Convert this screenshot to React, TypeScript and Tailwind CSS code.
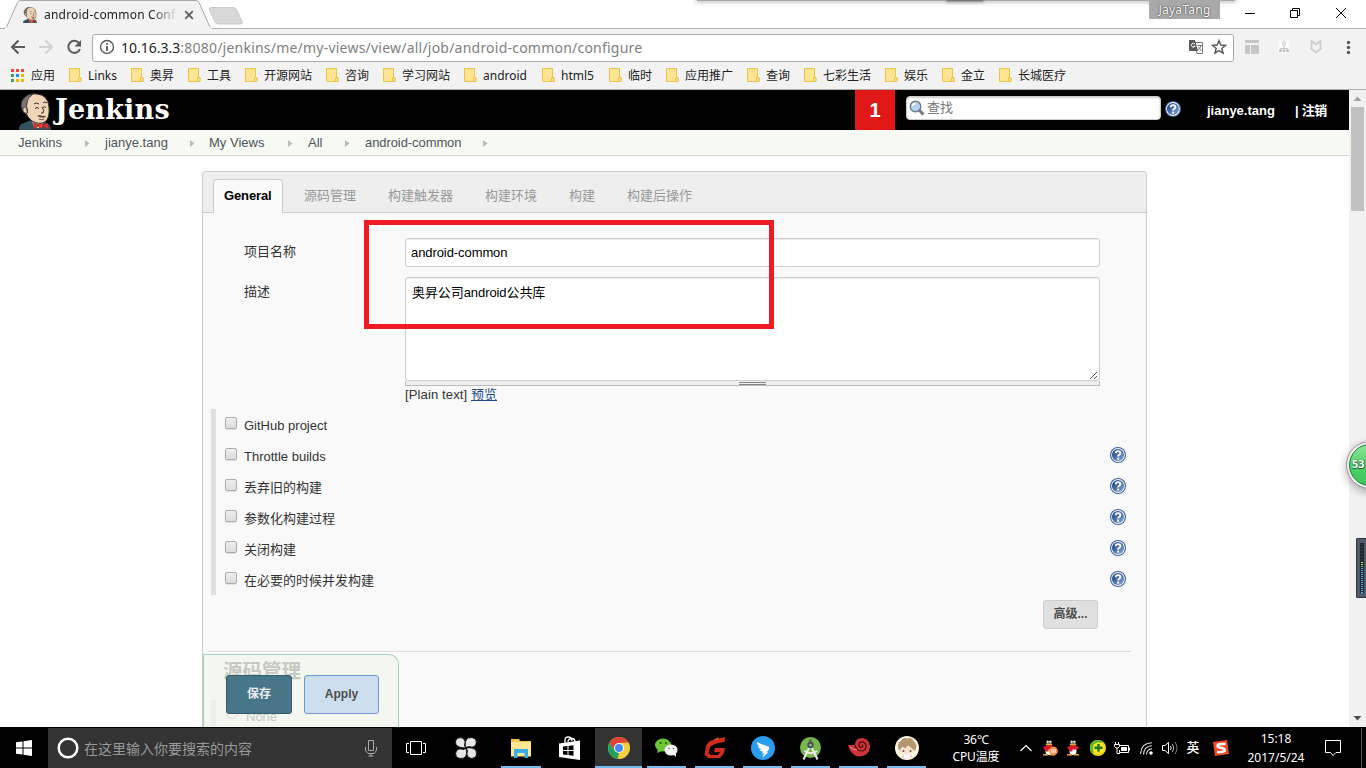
import React from "react";

const ui = "font-['Noto_Sans','Noto_Sans_CJK_SC',sans-serif]";
const web = "font-['Liberation_Sans','Noto_Sans_CJK_SC',sans-serif]";

function Butler({ className }: { className: string }) {
  return (
    <svg className={className} viewBox="0 0 34 37">
      <path d="M1 37 Q1 31 5 30.500 L13 27 L27 29 Q33 31 33 37Z" fill="#335061" />
      <path d="M14 27 L25 29 L24 35 L16 35Z" fill="#fff" />
      <path d="M5 17 Q2 10 7 5 Q11 0 19 1 Q30 2 31 14 Q32 25 27 29 Q21 32 14 28 Q9 24 8 20Z" fill="#f0d6b7" stroke="#3a2c26" strokeWidth="1" />
      <path d="M14 2 Q9 5 9 10 Q8 14 9.500 17 Q10 21 8 21 Q4 19 3 13 Q3 7 7 4 Q10 1 15 1Z" fill="#7c7472" stroke="#2d2624" strokeWidth=".8" />
      <path d="M7 14 Q4 14 5 18 Q6 21 9 20" fill="#f0d6b7" stroke="#3a2c26" strokeWidth=".8" />
      <path d="M16 11 Q18 9 21 11 M25 10 Q27 8 29 10" stroke="#3a2c26" strokeWidth="1" fill="none" />
      <path d="M17 15.500 q2 -2 4 0 M25 14.500 q2 -1.500 3 0 M24 14 Q27 18 25 20 L23 20" stroke="#3a2c26" strokeWidth="1" fill="none" />
      <path d="M19 23 Q22 21 24 23 Q27 22 28 24 Q24 26 19 23Z" fill="#5e4b41" />
      <path d="M21 26 q3 1.500 5 0" stroke="#3a2c26" strokeWidth=".8" fill="none" />
      <path d="M15.500 29.500 L22 32 L16 36.500 Z M30 30 L23.500 32.500 L30.500 36.500 Z" fill="#d33833" stroke="#81201d" strokeWidth=".6" />
      <circle cx="22.800" cy="32.700" r="2.300" fill="#ef3d3a" stroke="#81201d" strokeWidth=".6" />
    </svg>
  );
}

function Help({ className = "" }: { className?: string }) {
  return (
    <svg className={"h-4 w-4 shrink-0 " + className} viewBox="0 0 16 16">
      <defs>
        <linearGradient id="help" x1="0" y1="0" x2="1" y2="1">
          <stop offset="0.100" stopColor="#1e4382" />
          <stop offset="1" stopColor="#86add9" />
        </linearGradient>
      </defs>
      <circle cx="8" cy="8" r="8" fill="#3a5f9d" />
      <circle cx="8" cy="8" r="6.900" fill="#fff" />
      <circle cx="8" cy="8" r="6.100" fill="url(#help)" />
      <path d="M5.700 6.300 Q5.700 4.100 8 4.100 Q10.400 4.100 10.400 6.100 Q10.400 7.200 9.100 7.800 Q8.100 8.300 8.100 9.500" fill="none" stroke="#fff" strokeWidth="1.900" />
      <rect x="7.100" y="10.600" width="2" height="2" fill="#fff" />
    </svg>
  );
}

function Folder() {
  return (
    <svg className="h-[15px] w-[13px] shrink-0" viewBox="0 0 13 15">
      <path d="M.5 .5 H10.500 V9.500 H12 V13.500 H.5Z" fill="#ffe592" stroke="#e9c44c" />
      <path d="M9.500 13.500 V10 H12 V13.500Z" fill="#ffe592" stroke="#e9c44c" />
    </svg>
  );
}

const bookmarks = [
  { name: "Links", w: "w-[62px]" },
  { name: "奥昇", w: "w-[57px]" },
  { name: "工具", w: "w-[57px]" },
  { name: "开源网站", w: "w-[81px]" },
  { name: "咨询", w: "w-[57px]" },
  { name: "学习网站", w: "w-[81px]" },
  { name: "android", w: "w-[78px]" },
  { name: "html5", w: "w-[67px]" },
  { name: "临时", w: "w-[57px]" },
  { name: "应用推广", w: "w-[81px]" },
  { name: "查询", w: "w-[57px]" },
  { name: "七彩生活", w: "w-[81px]" },
  { name: "娱乐", w: "w-[57px]" },
  { name: "金立", w: "w-[57px]" },
  { name: "长城医疗", w: "w-[81px]" },
];

const appColors = ["#f44336", "#f44336", "#f44336", "#3ba55d", "#2b8cf0", "#f5b400", "#3ba55d", "#f5b400", "#f5b400"];

function Browser() {
  return (
    <div className={"shrink-0 text-[#222] " + ui}>
      <div className="relative flex h-[29px] items-start border-b border-[#b3b3b3] bg-white">
        <div className="relative h-[29px] w-[250px]">
          <svg className="absolute inset-0 h-[29px] w-[250px]" viewBox="0 0 250 29">
            <path d="M0 29 V28.500 H4 Q6 28.500 7 26 L17.500 2.500 Q18.500 .5 20.500 .5 H196 Q198 .5 199 2.500 L209.500 26 Q210.500 28.500 213 28.500 V29Z" fill="#f2f2f2" stroke="#a8a8a8" />
            <path d="M5 28.500 H212" stroke="#f2f2f2" strokeWidth="2" />
            <path d="M211.500 7.500 H233.500 Q235.500 7.500 236.500 9.500 L242 21.500 Q243 24 240.500 24 H218 Q216 24 215 22 L209.500 10 Q208.500 7.500 211.500 7.500Z" fill="#d8d8d8" stroke="#c9c9c9" />
          </svg>
          <div className="relative flex h-[29px] items-center pl-[22px]">
            <Butler className="h-4 w-4" />
            <span className="ml-[6px] w-[132px] text-[12px] tracking-[0.200px] whitespace-nowrap [mask-image:linear-gradient(to_right,#000_108px,transparent_134px)]">
              android-common Conf
            </span>
            <svg className="ml-[8px] h-[10px] w-[10px]" viewBox="0 0 10 10">
              <path d="M1.200 1.200 L8.800 8.800 M8.800 1.200 L1.200 8.800" stroke="#5a5a5a" strokeWidth="1.700" />
            </svg>
          </div>
        </div>
        <div className="ml-[447px] h-px w-[538px] bg-[#aaa] shadow-[0_0_4px_1px_#aaa]">
          <div className="ml-[250px] h-px w-[36px] bg-[#777] shadow-[0_0_3px_1px_#888]" />
        </div>
        <div className="absolute top-0 left-[1149px] h-[19px] w-[71px] bg-[#a9a9a9] text-center text-[12px] leading-[20px] tracking-[0.250px] text-white [text-shadow:0_0_2px_#444,0_0_1px_#333]">
          JayaTang
        </div>
        <svg className="absolute top-[7px] left-[1244px] h-3 w-[104px]" viewBox="0 0 104 12" fill="none" stroke="#000">
          <path d="M1 6.500 H11 M46.500 3.500 H53.500 V10.500 H46.500Z M48.500 3 V1.500 H55.500 V8.500 H54 M92 1 L102 11 M102 1 L92 11" />
        </svg>
      </div>

      <div className="flex h-[33px] items-center bg-[#f2f2f2] pt-1">
        <svg className="ml-[10px] h-[18px] w-[74px]" viewBox="0 0 74 18" fill="none" strokeWidth="2">
          <path d="M15 8 H2 M8.500 1.500 L2 8 L8.500 14.500" stroke="#5a5a5a" />
          <path d="M29 8 H42 M35.500 1.500 L42 8 L35.500 14.500" stroke="#d2d2d2" />
          <path d="M69 4 A6 6 0 1 0 70 10" stroke="#5a5a5a" />
          <path d="M71 1 V7.500 H64.500Z" fill="#5a5a5a" />
        </svg>
        <div className="ml-2 flex h-7 w-[1142px] items-center rounded-[3px] border border-[#a9a9a9] bg-white pb-px">
          <svg className="ml-[6px] h-4 w-4" viewBox="0 0 16 16" fill="none" stroke="#5a5a5a">
            <circle cx="8" cy="8" r="6.500" strokeWidth="1.400" />
            <path d="M8 7 V12 M8 4 V5.800" strokeWidth="1.800" />
          </svg>
          <span className="ml-[6px] text-[14px] tracking-[0.220px] whitespace-nowrap text-[#808080]">
            <span className="tracking-normal text-[#222]">10.16.3.3</span>:8080/jenkins/me/my-views/view/all/job/android-common/configure
          </span>
          <svg className="ml-auto h-4 w-[15px]" viewBox="0 0 15 16">
            <path d="M6 3.500 H13.500 V14.500 H8Z" fill="#fff" stroke="#777" />
            <path d="M0 1 H6 L9 12 H1 Q0 12 0 11Z" fill="#5a5a5a" />
            <path d="M6 5 A2 2 0 1 0 6.200 7 H4.500" fill="none" stroke="#fff" />
            <path d="M8.500 6.500 H13 M12 6.500 Q11 10 8.500 11 M9.500 8 L12.500 12" fill="none" stroke="#777" />
          </svg>
          <svg className="mr-[6px] ml-[7px] h-[16px] w-[16px]" viewBox="0 0 15 15">
            <path d="M7.500 1.500 L9.200 5.600 L13.600 6 L10.200 8.900 L11.300 13.200 L7.500 10.900 L3.700 13.200 L4.800 8.900 L1.400 6 L5.800 5.600Z" fill="none" stroke="#5a5a5a" strokeWidth="1.400" />
          </svg>
        </div>
        <svg className="ml-[10px] h-4 w-[110px]" viewBox="0 0 110 16">
          <path d="M1 0 H15 V3 H1Z M1 5 H6 V14 H1Z M7 5 H15 V14 H7Z" fill="#c6c6c6" />
          <rect x="34" y="1" width="12" height="12" rx="1" fill="#fbfbfb" />
          <path d="M40 5 V9 M36.500 10 V8.500 H43.500 V10" stroke="#c4c4c4" fill="none" />
          <circle cx="40" cy="3.500" r="1.500" fill="none" stroke="#c4c4c4" />
          <path d="M35 9.500 h3 v2.500 h-3z M38.700 9.500 h2.800 v2.500 h-2.800z M42.200 9.500 h3 v2.500 h-3z" fill="#c4c4c4" />
          <path d="M67.500 7.500 V1 L72 4.500 L76.500 1 V7.500 M66.500 8 L72 12.500 L77.500 8" fill="none" stroke="#d0d0d0" strokeWidth="2" />
          <circle cx="104.500" cy="2.500" r="1.700" fill="#5a5a5a" />
          <circle cx="104.500" cy="7.500" r="1.700" fill="#5a5a5a" />
          <circle cx="104.500" cy="12.500" r="1.700" fill="#5a5a5a" />
        </svg>
      </div>

      <div className="flex h-7 items-center border-b border-[#b0b0b0] bg-[#f2f2f2] pl-[11px] text-[12px] whitespace-nowrap">
        <div className="flex w-[58px] items-center">
          <svg className="h-[13px] w-[13px]" viewBox="0 0 13 13">
            {appColors.map((c, i) => (
              <rect key={i} x={(i % 3) * 5} y={Math.floor(i / 3) * 5} width="3" height="3" fill={c} />
            ))}
          </svg>
          <span className="ml-[7px]">应用</span>
        </div>
        {bookmarks.map((b) => (
          <div key={b.name} className={"flex shrink-0 items-center gap-[6px] " + b.w}>
            <Folder />
            <span>{b.name}</span>
          </div>
        ))}
      </div>
    </div>
  );
}

const crumbs = [
  { name: "Jenkins", w: "w-[87px]" },
  { name: "jianye.tang", w: "w-[104px]" },
  { name: "My Views", w: "w-[99px]" },
  { name: "All", w: "w-[57px]" },
  { name: "android-common", w: "w-[138px]" },
];
const arrowPos = ["pl-[67px]", "pl-[85px]", "pl-[79px]", "pl-[37px]", "pl-[118px]"];

function Header() {
  return (
    <>
      <div className="flex h-10 shrink-0 items-center bg-black text-white">
        <Butler className="mt-[3px] ml-[18px] h-[37px] w-[34px]" />
        <span className="ml-[3px] w-[120px] font-['DejaVu_Serif',serif] text-[27px] leading-[38px] font-bold tracking-[0.200px]">Jenkins</span>
        <div className="ml-[680px] h-10 w-10 bg-[#e11818] text-center text-[20px] leading-10 font-bold">1</div>
        <div className="mb-[5px] ml-[11px] flex h-6 w-[255px] items-center rounded-[4px] border border-[#ccc] bg-white text-[13px] text-[#777] shadow-[inset_0_1px_2px_#ccc]">
          <svg className="ml-[2px] h-4 w-4" viewBox="0 0 16 16">
            <path d="M10 10 L14.500 14.500" stroke="#777" strokeWidth="3" />
            <circle cx="6.500" cy="6.500" r="5.300" fill="#b4d0f0" stroke="#6c7a8c" strokeWidth="1.400" />
            <path d="M3.500 6 Q4 3.500 6.500 3.500" stroke="#fff" fill="none" strokeWidth="1.500" />
          </svg>
          <span className="ml-[2px]">查找</span>
        </div>
        <Help className="mb-[2px] ml-1" />
        <span className="ml-[26px] w-[88px] pt-px text-[13px] font-bold">jianye.tang</span>
        <span className="pt-px text-[13px] font-bold tracking-[-0.300px] whitespace-nowrap">| 注销</span>
      </div>
      <div className="flex h-[26px] shrink-0 items-center border-b border-[#d3d7cf] bg-[#f6faf2] pl-[18px] text-[13px] text-[#4d545d]">
        {crumbs.map((c, i) => (
          <div key={c.name} className={"grid h-[25px] items-center " + c.w}>
            <span className={"col-start-1 row-start-1" + (i === 4 ? " tracking-[-0.080px]" : "")}>{c.name}</span>
            <span className={"col-start-1 row-start-1 " + arrowPos[i]}>
              <svg className="mt-[2px] h-[7px] w-[5px]" viewBox="0 0 5 7">
                <path d="M0 0 L4.500 3.500 L0 7Z" fill="#bbb" />
              </svg>
            </span>
          </div>
        ))}
      </div>
    </>
  );
}

const tabs = ["源码管理", "构建触发器", "构建环境", "构建", "构建后操作"];
const options = ["GitHub project", "Throttle builds", "丢弃旧的构建", "参数化构建过程", "关闭构建", "在必要的时候并发构建"];

function Config() {
  return (
    <div className="mt-[15px] ml-[202px] flex h-[556px] w-[945px] shrink-0 flex-col overflow-hidden rounded-t-[4px] border border-b-0 border-[#ccc] bg-[#f9f9f9] text-[13px] text-[#333]">
      <div className="flex h-[41px] shrink-0 items-end border-b border-[#ccc] bg-[#eee] pl-[10px]">
        <div className="mb-[-1px] h-[34px] w-[70px] rounded-t-[4px] border border-b-0 border-[#ccc] bg-[#f9f9f9] pl-[10px] leading-[32px] font-bold tracking-[-0.120px] text-black">General</div>
        <div className="flex gap-8 pl-[21px] leading-[33px] text-[#999]">
          {tabs.map((t) => (
            <span key={t}>{t}</span>
          ))}
        </div>
      </div>

      <div className="flex pt-[25px] pl-[41px]">
        <span className="w-[161px] leading-[28px]">项目名称</span>
        <div className="h-[29px] w-[695px] rounded-[3px] border border-[#ccc] bg-white pl-[5px] leading-[27px] tracking-[-0.080px] text-black shadow-[inset_0_1px_1px_rgba(0,0,0,.075)]">android-common</div>
      </div>
      <div className="flex pt-[10px] pl-[41px]">
        <span className="w-[161px] leading-[30px]">描述</span>
        <div className="w-[695px]">
          <div className="flex h-[104px] justify-between rounded-[3px] border border-[#ccc] bg-white pl-[6px] leading-[29px] tracking-[-0.080px] text-black shadow-[inset_0_1px_1px_rgba(0,0,0,.075)]">
            <span>奥昇公司android公共库</span>
            <svg className="h-[10px] w-[10px] self-end" viewBox="0 0 10 10">
              <path d="M1 9 L8 2 M5 9 L8 6" stroke="#555" />
            </svg>
          </div>
          <div className="flex h-[5px] items-center justify-center border border-t-0 border-[#bbb] bg-[#eee]">
            <div className="h-[3px] w-[27px] border-y border-[#888]" />
          </div>
          <div className="leading-[17px]">
            <span className="tracking-[0.130px]">[Plain text] </span>
            <span className="text-[#204a87] underline">预览</span>
          </div>
        </div>
      </div>

      <div className="mt-[6px] ml-2 border-l-[5px] border-[#e0e0e0]">
        {options.map((o, i) => (
          <div key={o} className="flex h-[31px] items-start pl-[9px]">
            <span className="mt-2 h-3 w-3 rounded-[2px] border border-[#adadad] bg-linear-to-b from-[#eee] to-[#dcdcdc] shadow-[0_1px_1px_#ddd]" />
            <span className="ml-[7px] w-[866px] leading-[33px]">{o}</span>
            {i > 0 && <Help className="mt-[7px]" />}
          </div>
        ))}
      </div>
      <div className="mt-[5px] ml-[840px] h-[29px] w-[55px] rounded-[3px] border border-[#ccc] bg-[#e0e0e0] text-center text-[12px] leading-[27px] font-bold text-[#4d4d4d]">高级...</div>
      <div className="mt-[22px] ml-[5px] h-px w-[923px] shrink-0 bg-[#ddd]" />

      <div className="mt-[2px] grid h-[74px] w-[196px] shrink-0 overflow-hidden rounded-tr-[10px] border border-b-0 border-[#a5d0bd] bg-[#f4f7f0] text-[#c5c9c1]">
        <div className="col-start-1 row-start-1 pl-[19px]">
          <div className="h-[45px] text-[19.500px] leading-[33px] font-bold">源码管理</div>
          <div className="-ml-[12px] flex h-[31px] border-l-[5px] border-[#eceee9] pl-[10px]">
            <span className="mt-[7px] h-3 w-3 rounded-full border border-[#d8dbd5]" />
            <span className="ml-2 leading-[34px]">None</span>
          </div>
        </div>
        <div className="relative col-start-1 row-start-1 flex gap-3 pt-5 pl-[22px] text-center leading-[37px] font-bold">
          <div className="h-[39px] w-[66px] rounded-[3px] border border-[#345b69] bg-[#467688] text-[12px] text-[#eee]">保存</div>
          <div className="h-[39px] w-[75px] rounded-[3px] border border-[#6b9bd2] bg-[#cddeee] text-[12px] text-[#4d4d4d]">Apply</div>
        </div>
      </div>
    </div>
  );
}

function Scrollbar() {
  return (
    <div className="flex w-[17px] shrink-0 flex-col items-center bg-[#f1f1f1]">
      <svg className="h-[17px] w-[17px]" viewBox="0 0 17 17"><path d="M4.500 11 L8.500 6.500 L12.500 11Z" fill="#a3a3a3" /></svg>
      <div className="h-[104px] w-[13px] bg-[#c1c1c1]" />
      <svg className="mt-auto h-[17px] w-[17px]" viewBox="0 0 17 17"><path d="M4.500 6 L8.500 10.500 L12.500 6Z" fill="#505050" /></svg>
    </div>
  );
}

function TaskButton({ w, children, active, line = true }: { w: string; children: React.ReactNode; active?: boolean; line?: boolean }) {
  return (
    <div className={"flex h-10 shrink-0 items-center justify-center " + w + (active ? " bg-[#333]" : "") + (line ? " border-b-2 border-[#76b9ed] pt-[2px]" : "")}>
      {children}
    </div>
  );
}

function Tray({ children }: { children: React.ReactNode }) {
  return <div className="flex w-6 shrink-0 items-center justify-center">{children}</div>;
}

function Penguin({ badge }: { badge?: boolean }) {
  return (
    <svg className="h-4 w-4" viewBox="0 0 16 16">
      <ellipse cx="7" cy="9.500" rx="4.500" ry="5.500" fill="#111" />
      <ellipse cx="7" cy="11" rx="3.500" ry="4" fill="#fff" />
      <ellipse cx="7" cy="4" rx="3.500" ry="3.500" fill="#222" />
      <ellipse cx="5.700" cy="2" rx="1.200" ry="1.500" fill="#fff" />
      <ellipse cx="8.300" cy="2" rx="1.200" ry="1.500" fill="#fff" />
      <circle cx="6" cy="2.200" r=".5" fill="#111" /><circle cx="8" cy="2.200" r=".5" fill="#111" />
      <path d="M3.500 4 Q7 3 10.500 4 L9.500 5.500 H4.500Z M1 14 h5 v1.500 H1Z M8 14 h5 v1.500 H8Z" fill="#f9a72b" />
      <path d="M1 7 Q7 4 13 7 L12 9 Q6 10 2 9Z M3 8 h3.500 v3.500 h-3.500z" fill="#e0182d" />
      {badge && (
        <>
          <circle cx="11.500" cy="11" r="4.300" fill="#ff8f4c" />
          <path d="M9 10 H14 M9 12 H14" stroke="#fff" />
        </>
      )}
    </svg>
  );
}

function Taskbar() {
  return (
    <div className={"flex h-[41px] shrink-0 items-stretch overflow-hidden bg-black pt-px whitespace-nowrap text-white " + ui}>
      <div className="flex w-12 shrink-0 items-center justify-center">
        <svg className="h-4 w-4" viewBox="0 0 16 16" fill="#fff">
          <path d="M0 2.300 L6.500 1.400 V7.500 H0Z M7.500 1.200 L16 0 V7.500 H7.500Z M0 8.500 H6.500 V14.600 L0 13.700Z M7.500 8.500 H16 V16 L7.500 14.800Z" />
        </svg>
      </div>
      <div className="flex w-[344px] shrink-0 items-center bg-[#333] pl-[9px]">
        <svg className="h-[22px] w-[22px]" viewBox="0 0 22 22"><circle cx="11" cy="11" r="9.300" fill="none" stroke="#fff" strokeWidth="2.500" /></svg>
        <span className="ml-[5px] text-[14px] text-[#999]">在这里输入你要搜索的内容</span>
        <svg className="ml-auto h-[18px] w-3" viewBox="0 0 12 18" fill="none" stroke="#aaa">
          <path d="M3.500 1.500 H8.500 V11.500 H3.500Z M.5 8 V11.500 L3 14.500 H9 L11.500 11.500 V8 M6 14.500 V17 M3.500 17 H8.500" />
        </svg>
        <span className="w-[15px]" />
      </div>
      <TaskButton w="w-12" line={false}>
        <svg className="h-[14px] w-5" viewBox="0 0 20 14" fill="none" stroke="#fff"><path d="M4.500 .5 H15.500 V13.500 H4.500Z M3 2.500 H.5 V11.500 H3 M17 2.500 H19.500 V11.500 H17" /></svg>
      </TaskButton>
      <TaskButton w="ml-[6px] w-10" line={false}>
        <svg className="h-[22px] w-[22px]" viewBox="0 0 22 22" fill="#e6e6e6" stroke="#000" strokeWidth=".8">
          <path d="M10.500 11 Q4 11 1 8 Q-.5 4 2 1.500 Q6 -.5 9 2 Q11 5 9.500 8Z" />
          <path d="M10.700 10.500 Q9 4 13 1 Q17 -.5 20.500 2 Q22.500 6 20 9 Q17 11 14 9.500Z" />
          <path d="M11.300 11 Q18 10 21 13.500 Q22.500 18 20 20.500 Q16 22.500 13 20 Q11 17 12.500 14Z" />
          <path d="M11 11.500 Q13 18 9 21 Q5 22.500 1.500 20 Q-.5 16 2 13 Q5 11 8 12.500Z" />
        </svg>
      </TaskButton>
      <TaskButton w="ml-[15px] w-10">
        <svg className="h-[19px] w-[22px]" viewBox="0 0 22 19">
          <path d="M1 0 H9 L10 2 H21 V17 H1Z" fill="#f5c750" />
          <path d="M1 3 H21 V17.500 H1Z" fill="#ffe694" />
          <path d="M4 19 V10 H18 V19 H14.500 V14 H7.500 V19Z" fill="#3aaee8" />
        </svg>
      </TaskButton>
      <TaskButton w="ml-[9px] w-10" line={false}>
        <svg className="h-6 w-[22px]" viewBox="0 0 22 24">
          <path d="M0 7.500 L21 4.500 V24 L0 21Z" fill="#fff" />
          <path d="M6 8 V4 Q6 1 9 1 Q13 1 13 5 M9 6 Q9 3 13 2.500 Q16 2.500 16 6" fill="none" stroke="#fff" strokeWidth="1.300" />
          <path d="M4 10.500 L8.500 10 V14 H4Z M9.500 9.900 L14.500 9.300 V14 H9.500Z M4 15 H8.500 V19 L4 18.500Z M9.500 15 H14.500 V19.700 L9.500 19.100Z" fill="#000" />
        </svg>
      </TaskButton>
      <TaskButton w="ml-[5px] w-[47px]" active>
        <svg className="h-[22px] w-[22px]" viewBox="0 0 22 22">
          <circle cx="11" cy="11" r="11" fill="#f8cc3c" />
          <path d="M1.500 5.500 A11 11 0 0 1 20.500 5.500 L11 6 L6.500 13.500Z" fill="#dc4437" />
          <path d="M1.500 5.500 L6.700 13.500 L11 16 L9.500 21.900 A11 11 0 0 1 1.500 5.500Z" fill="#1da261" />
          <circle cx="11" cy="11" r="5" fill="#fff" />
          <circle cx="11" cy="11" r="4" fill="#4688f1" />
        </svg>
      </TaskButton>
      <TaskButton w="ml-[5px] w-[39px]">
        <svg className="mb-[2px] h-[19px] w-[23px]" viewBox="0 0 23 19">
          <ellipse cx="8" cy="7" rx="8" ry="6.500" fill="#6cc535" />
          <path d="M3 11 L2 15 L7 13Z" fill="#6cc535" />
          <ellipse cx="16" cy="12" rx="6.500" ry="5.500" fill="#f4f4f4" />
          <path d="M18 16 L21 19 L21 14Z" fill="#f4f4f4" />
          <circle cx="5.500" cy="5" r="1" fill="#17500c" /><circle cx="11" cy="5" r="1" fill="#17500c" />
          <circle cx="14" cy="10.500" r=".8" fill="#666" /><circle cx="18.500" cy="10.500" r=".8" fill="#666" />
        </svg>
      </TaskButton>
      <TaskButton w="ml-[9px] w-[39px]">
        <svg className="mb-px h-[22px] w-[22px]" viewBox="0 0 22 22">
          <path d="M21 0 L20.500 5 Q10 6 6 10 L4.500 16 L7 18 H14 L16 15 H10 L11 11 H21 L19.500 17 L16 21 H4 L.5 17.500 L2 9 Q4 4 9 3Z" fill="#d32a1f" />
          <path d="M9 3 L15 0 L14 3Z" fill="#e54a3b" />
        </svg>
      </TaskButton>
      <TaskButton w="ml-[9px] w-[39px]">
        <svg className="h-6 w-6" viewBox="0 0 24 24">
          <circle cx="12" cy="12" r="12" fill="#2a9df0" />
          <path d="M6 6 Q12 9 17.500 10.500 Q19 11.500 17.500 14 L15.500 16.500 H17.500 L11.500 21.500 L13 17.500 H11 L12 15.500 Q8.500 15 8.500 13.500 Q10.500 13.500 11 13 Q7 12.500 7 10 L9 10.500 Q6 9 6 6Z" fill="#fff" />
        </svg>
      </TaskButton>
      <TaskButton w="ml-[9px] w-[39px]">
        <svg className="h-[23px] w-[22px]" viewBox="0 0 22 23">
          <circle cx="10.500" cy="10.500" r="10.500" fill="#78b84b" />
          <path d="M9.500 10 L3.500 22.500 M11.500 10 L17.500 22.500 M4.500 14 Q10.500 18.500 17 14" stroke="#ededed" strokeWidth="2" fill="none" />
          <circle cx="10.500" cy="8" r="3.200" fill="#455054" /><circle cx="10.500" cy="8" r="1.200" fill="#a9c79a" />
          <path d="M9.500 2.500 H11.500 V6 H9.500Z" fill="#455054" />
        </svg>
      </TaskButton>
      <TaskButton w="ml-[9px] w-[39px]">
        <svg className="mb-px h-[19px] w-[22px]" viewBox="0 0 22 19">
          <path d="M0 7 L7 7 Q7 0 14 0 Q22 1 22 9 Q21 18 11 18.500 Q3 18 0 7Z" fill="#cf3438" />
          <path d="M7 7 Q8 13 14 13 Q19 12 18 7 Q16 2.500 12 4.500 Q9.500 7 12.500 9.500 Q16 9 14 6.500" fill="none" stroke="#3a0a0c" strokeWidth="1.200" />
          <path d="M2 9 Q5 12 9 12" stroke="#ff9791" fill="none" />
        </svg>
      </TaskButton>
      <TaskButton w="ml-[9px] w-[39px]">
        <svg className="h-6 w-6" viewBox="0 0 24 24">
          <circle cx="12" cy="12" r="12" fill="#fbf7df" />
          <path d="M3.500 13 Q1.500 7 6 5 Q8 1 12 2.500 Q17 1 18.500 5 Q23 8 20.500 14 L17 16 H6Z" fill="#b59670" />
          <path d="M5 14 L7.500 10.500 L10 12.500 L13.500 9.500 L17 12.500 L19 14 Q17 19.500 12 19.500 Q7 19.500 5 14Z" fill="#fbe5cf" />
          <circle cx="8.500" cy="15" r="1" fill="#6b4634" /><circle cx="15.500" cy="15" r="1" fill="#6b4634" />
          <path d="M7 19.500 H17 L17.500 21.500 Q12 24 6.500 21.500Z" fill="#f0cdb8" /><rect x="9" y="18.500" width="6" height="4" fill="#fff" />
        </svg>
      </TaskButton>
      <div className="ml-[26px] w-12 shrink-0 pt-[3px] text-center text-[12px] leading-[17px] tracking-[-0.150px]">
        <div>36℃</div>
        <div>CPU温度</div>
      </div>
      <div className="ml-[14px] flex shrink-0">
        <Tray><svg className="h-2 w-3" viewBox="0 0 12 8"><path d="M.5 7 L6 1.500 L11.500 7" fill="none" stroke="#fff" strokeWidth="1.200" /></svg></Tray>
        <Tray><Penguin badge /></Tray>
        <Tray><Penguin /></Tray>
        <Tray>
          <svg className="h-4 w-4" viewBox="0 0 16 16"><circle cx="8" cy="8" r="8" fill="#f5d51c" /><path d="M13 2 A8 8 0 1 0 4 15 Q1 6 13 2Z" fill="#61b82c" /><circle cx="8.500" cy="8" r="5.500" fill="#ffe42a" /><path d="M8.500 4 V11.500 M4.500 7.800 H12.500" stroke="#167b22" strokeWidth="2.500" /></svg>
        </Tray>
        <Tray>
          <svg className="h-3 w-4" viewBox="0 0 16 12" fill="none" stroke="#fff"><path d="M5.500 3.500 H14.500 V10.500 H5.500 V8 M15.500 5.500 V8.500 M1.500 0 V2 M4.500 0 V2 M.5 2.500 H5.500 V4.500 L4 6 H2 L.5 4.500Z M3 6 V11.500 H6" /><path d="M7.500 5.500 H12.500 V8.500 H7.500Z" fill="#fff" /></svg>
        </Tray>
        <Tray>
          <svg className="h-[13px] w-[13px]" viewBox="0 0 13 13" fill="none" stroke="#ddd" strokeWidth="1.100"><path d="M.5 12 Q1 1 12 .8 M3.500 12.500 Q4 4 12 3.700 M6.500 12.500 Q7 7 12 6.700" /><circle cx="11" cy="11" r="1.800" fill="#fff" stroke="none" /></svg>
        </Tray>
        <Tray>
          <svg className="h-[14px] w-4" viewBox="0 0 16 14" fill="none" stroke="#fff"><path d="M.5 4.500 H3 L6.500 1.500 V12.500 L3 9.500 H.5Z M8.500 5 Q10 7 8.500 9" /><path d="M10.500 3 Q13 7 10.500 11" stroke="#bbb" /><path d="M13 1 Q17 7 13 13" stroke="#777" /></svg>
        </Tray>
        <Tray><span className="mr-[2px] text-[13px] font-medium">英</span></Tray>
        <div className="flex w-8 items-center justify-center">
          <svg className="mr-[2px] h-4 w-4" viewBox="0 0 16 16"><path d="M0 2 L14 0 L16 14 L2 16Z" fill="#f04a23" /><path d="M12.500 4 Q4 3.500 4.500 6 Q5 7.500 9 8 Q12.500 9 11.500 11 Q10 12.500 4 12" fill="none" stroke="#fff" strokeWidth="2.500" /></svg>
        </div>
      </div>
      <div className="w-[76px] shrink-0 pt-[1px] text-center text-[12px] leading-[19px]">
        <div>15:18</div>
        <div>2017/5/24</div>
      </div>
      <div className="flex w-[38px] shrink-0 items-center justify-center">
        <svg className="h-4 w-4" viewBox="0 0 16 16"><path d="M.5 .5 H15.500 V12.500 H11 L8 15.500 L5.500 12.500 H.5Z" fill="none" stroke="#fff" /></svg>
      </div>
      <div className="ml-[9px] w-px bg-[#555]" />
    </div>
  );
}

const meter = Array.from({ length: 17 }, (_, i) => i);

function Overlays() {
  return (
    <>
      <div className="absolute top-[220px] left-[364px] h-[109px] w-[410px] border-[5px] border-[#ed1c24]" />
      <div className="absolute top-[430px] left-[1336px] h-[80px] w-[30px] overflow-hidden pt-[11px] pl-[10px]">
        <div className="h-12 w-12 rounded-full border border-[#999] bg-[#eee] p-[2px] shadow-[0_3px_8px_rgba(0,0,0,.3)]">
          <div className="h-full w-full rounded-full border border-[#16803f] bg-linear-to-b from-[#8ee69a] via-[#4dd067] to-[#3fc65d]" />
        </div>
      </div>
      <div className={"absolute top-[457px] left-[1352px] text-[11px] leading-[14px] font-bold text-white [text-shadow:0_1px_1px_#17602d,1px_0_1px_#17602d] " + ui}>53</div>
      <div className="absolute top-[538px] left-[1356px] flex h-[60px] w-[10px] justify-center rounded-l-[2px] border border-r-0 border-[#30383f] bg-[#4f5b66] py-1">
        <div className="flex w-[4px] flex-col gap-px bg-[#22282e] px-[1px] pt-px">
          {meter.map((i) => (
            <div key={i} className={"h-px shrink-0 " + (i < 3 ? "mb-px" : i < 6 ? "mb-px" : "mb-0") + " " + (i < 6 ? "bg-[#383f45]" : i < 8 ? "bg-[#c3d93d]" : i < 9 ? "bg-[#4fd29b]" : "bg-[#35b8ff]")} />
          ))}
          {meter.slice(0, 5).map((i) => (
            <div key={i} className="h-px shrink-0 bg-[#35b8ff]" />
          ))}
        </div>
      </div>
    </>
  );
}

export default function App() {
  return (
    <div className="relative flex h-[768px] w-[1366px] flex-col overflow-hidden bg-white">
      <Browser />
      <div className={"flex h-[637px] shrink-0 " + web}>
        <div className="flex w-[1349px] flex-col overflow-hidden bg-white">
          <Header />
          <Config />
        </div>
        <Scrollbar />
      </div>
      <Taskbar />
      <Overlays />
    </div>
  );
}
